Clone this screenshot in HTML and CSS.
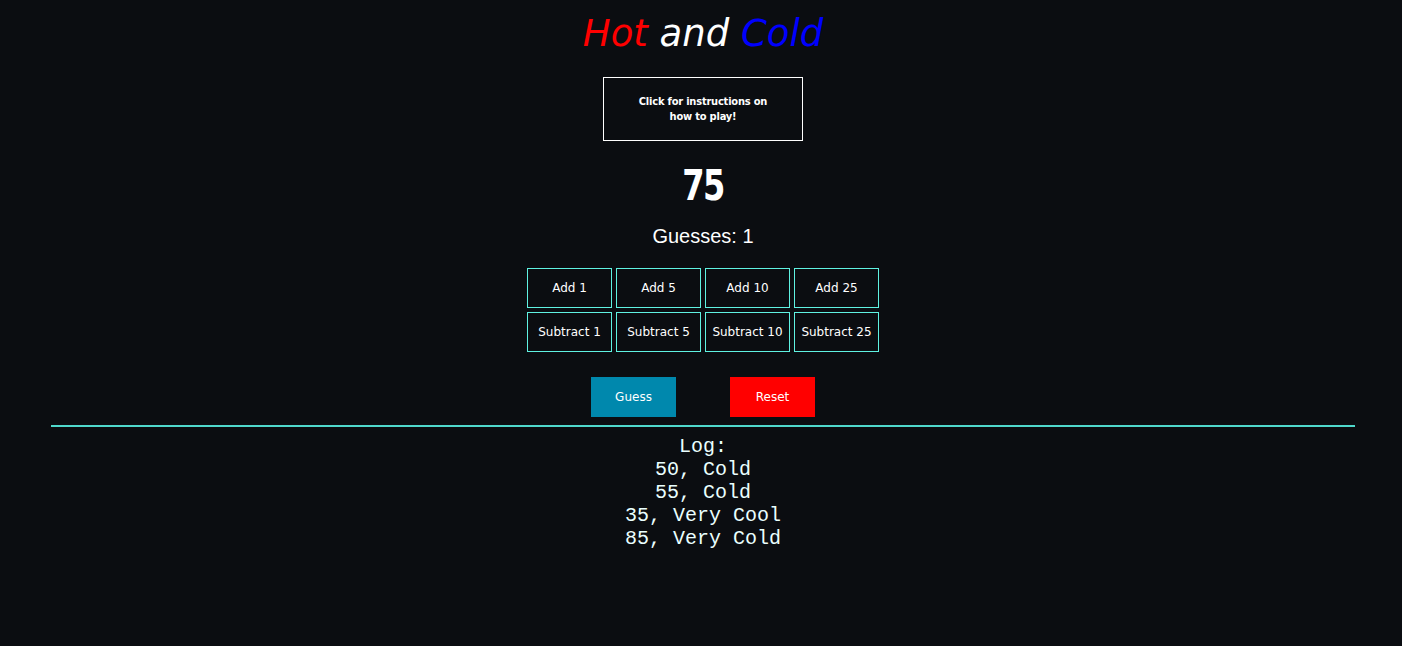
FILE: index.html
```html
<!DOCTYPE html>
<html>
<head>
<meta charset="utf-8">
<link rel="stylesheet" href="styles.css">
</head>
<body>
<h1 class="title"><span class="hot">Hot</span> and <span class="cold">Cold</span></h1>
<div class="instr-wrap"><button class="instr">Click for instructions on how to play!</button></div>
<div class="number">75</div>
<div class="guesses">Guesses: 1</div>
<div class="grid">
  <button class="step">Add 1</button>
  <button class="step">Add 5</button>
  <button class="step">Add 10</button>
  <button class="step">Add 25</button>
  <button class="step">Subtract 1</button>
  <button class="step">Subtract 5</button>
  <button class="step">Subtract 10</button>
  <button class="step">Subtract 25</button>
</div>
<div class="actions">
  <button class="act guess">Guess</button>
  <button class="act reset">Reset</button>
</div>
<div class="rule"></div>
<div class="log">
  <div>Log:</div>
  <div>50, Cold</div>
  <div>55, Cold</div>
  <div>35, Very Cool</div>
  <div>85, Very Cold</div>
</div>
</body>
</html>
```
FILE: styles.css
```css
html, body {
  margin: 0;
  padding: 0;
  background: #0b0d11;
  color: #ffffff;
}
body {
  padding-left: 4px;
  font-family: "Liberation Sans", Arial, sans-serif;
  text-align: center;
}
.title {
  margin: 0;
  padding-top: 9px;
  height: 68px;
  box-sizing: border-box;
  font-family: "DejaVu Sans", sans-serif;
  font-style: italic;
  font-weight: normal;
  font-size: 37px;
  line-height: 50px;
  color: #ffffff;
}
.hot { color: #ff0000; }
.cold { color: #0000ff; }
.instr-wrap {
  display: flex;
  justify-content: center;
  padding-top: 9px;
}
.instr {
  width: 200px;
  height: 64px;
  background: transparent;
  border: 1px solid #ffffff;
  color: #ffffff;
  font-family: "DejaVu Sans Condensed", "DejaVu Sans", sans-serif;
  font-weight: bold;
  font-size: 11px;
  line-height: 15px;
  padding: 0 30px;
  letter-spacing: -0.2px;
}
.number {
  margin-top: 22px;
  font-family: "DejaVu Sans Condensed", "DejaVu Sans", sans-serif;
  font-weight: bold;
  font-size: 42px;
  line-height: 46px;
  transform: scaleX(0.85);
  letter-spacing: -2px;
}
.guesses {
  margin-top: 15px;
  font-size: 20px;
  line-height: 24px;
}
.grid {
  display: grid;
  grid-template-columns: repeat(4, 85px);
  gap: 4px 4px;
  justify-content: center;
  margin-top: 20px;
}
.step {
  height: 40px;
  background: transparent;
  border: 1px solid #5ff2e2;
  color: #ffffff;
  font-family: "DejaVu Sans", Verdana, sans-serif;
  font-size: 12px;
  padding: 0;
}
.actions {
  display: flex;
  justify-content: center;
  gap: 54px;
  margin-top: 25px;
}
.act {
  width: 85px;
  height: 40px;
  border: none;
  color: #ffffff;
  font-family: "DejaVu Sans", Verdana, sans-serif;
  font-size: 12px;
  padding: 0;
}
.guess { background: #0088ad; }
.reset { background: #ff0000; }
.rule {
  height: 2px;
  background: #4fd8cc;
  margin: 8px 47px 0 47px;
}
.log {
  margin-top: 8px;
  font-family: "Liberation Mono", "Courier New", monospace;
  font-size: 20px;
  line-height: 23px;
  color: #eaffff;
}
```
